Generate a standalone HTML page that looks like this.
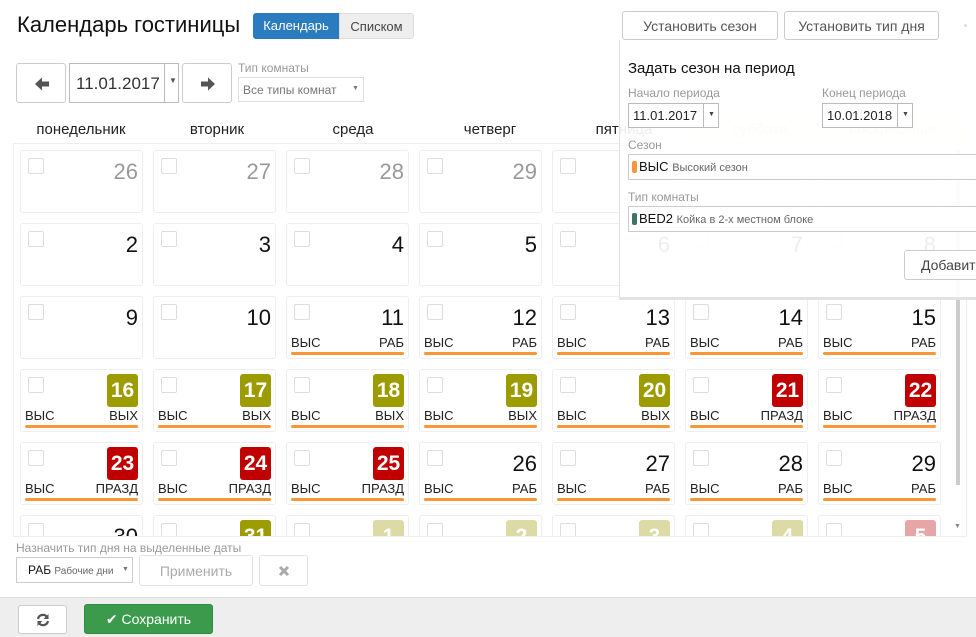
<!DOCTYPE html>
<html><head><meta charset="utf-8"><style>
*{box-sizing:border-box;margin:0;padding:0}
body{width:976px;height:637px;overflow:hidden;background:#fff;font-family:"Liberation Sans","DejaVu Sans",sans-serif;color:#222;position:relative}
.a{position:absolute}
.btn{position:absolute;border:1px solid #ccc;border-radius:3px;background:#fff;color:#555;text-align:center}
.wd{position:absolute;top:121px;font-size:15px;color:#222;text-align:center;width:134px}
.clip{position:absolute;left:13px;top:143px;width:943px;height:394px;overflow:hidden;border-left:1px solid #eee;border-top:1px solid #eee}
.c{position:absolute;width:123px;height:63px;border:1px solid #eee;border-radius:3px;background:#fff}
.cb{position:absolute;left:7px;top:7px;width:16px;height:16px;border:1px solid #ddd;border-radius:2px}
.n{position:absolute;right:4px;top:6px;font-size:22px;line-height:30px;color:#111}
.g .n{color:#999}
.f{opacity:.35}
.b{position:absolute;right:4px;top:4px;width:31px;height:33px;border-radius:3px;color:#fff;font-size:21px;font-weight:bold;line-height:33px;text-align:center}
.ol{background:#9c9b00}.rd{background:#c00000}
.l{position:absolute;left:4px;top:38px;font-size:13px;color:#222}
.r{position:absolute;right:4px;top:38px;font-size:13px;color:#222}
.ln{position:absolute;left:4px;right:4px;top:55px;height:3px;background:#f7973a;border-radius:2px}
.lab{position:absolute;font-size:12px;color:#999}
.inp{position:absolute;border:1px solid #ccc;background:#fff}
</style></head><body>
<div class="a" style="left:17px;top:12px;font-size:22px;color:#111">Календарь гостиницы</div>
<div class="a" style="left:253px;top:13px;width:86px;height:26px;background:#2b7bbf;color:#fff;font-size:13px;line-height:26px;text-align:center;border-radius:3px 0 0 3px">Календарь</div>
<div class="a" style="left:339px;top:13px;width:75px;height:26px;background:#eee;color:#444;font-size:13px;line-height:26px;text-align:center;border:1px solid #ddd;border-radius:0 3px 3px 0">Списком</div>

<div class="btn" style="left:16px;top:63px;width:50px;height:40px"><svg class="a" style="left:17px;top:12px" width="16" height="16" viewBox="0 0 16 16"><path d="M1 8 L8 1.5 L8 5.5 L15 5.5 L15 10.5 L8 10.5 L8 14.5 Z" fill="#555"/></svg></div>
<div class="inp" style="left:69px;top:63px;width:110px;height:40px;border-color:#bbb"><span class="a" style="left:6px;top:10px;font-size:17px;color:#333">11.01.2017</span><span class="a" style="left:94px;top:0;width:1px;height:38px;background:#bbb"></span><span class="a" style="left:99px;top:12px;font-size:8px;color:#555">▼</span></div>
<div class="btn" style="left:182px;top:63px;width:50px;height:40px"><svg class="a" style="left:17px;top:12px" width="16" height="16" viewBox="0 0 16 16"><path d="M15 8 L8 1.5 L8 5.5 L1 5.5 L1 10.5 L8 10.5 L8 14.5 Z" fill="#555"/></svg></div>
<div class="lab" style="left:238px;top:61px">Тип комнаты</div>
<div class="inp" style="left:238px;top:77px;width:126px;height:25px;border-color:#ddd"><span class="a" style="left:4px;top:5px;font-size:12px;color:#777">Все типы комнат</span><span class="a" style="left:113px;top:7px;font-size:7px;color:#777">▼</span></div>

<div class="btn" style="left:622px;top:11px;width:156px;height:29px;line-height:28px;font-size:14px">Установить сезон</div>
<div class="btn" style="left:784px;top:11px;width:155px;height:29px;line-height:28px;font-size:14px">Установить тип дня</div>
<div class="a" style="left:964px;top:24px;width:3px;height:3px;border-radius:2px;background:#ddd"></div>

<div class="a" style="left:693px;top:120px;width:272px;height:23px;background:#fdf3ea"></div>
<div class="wd" style="left:14px">понедельник</div>
<div class="wd" style="left:150px">вторник</div>
<div class="wd" style="left:286px">среда</div>
<div class="wd" style="left:423px">четверг</div>
<div class="wd" style="left:557px">пятница</div>
<div class="wd" style="left:693px;color:#f0c9a5">суббота</div>
<div class="wd" style="left:826px;color:#f0c9a5">воскресенье</div>

<div class="clip">
<div class="c g" style="left:6px;top:6px"><div class="cb"></div><div class="n">26</div></div>
<div class="c g" style="left:139px;top:6px"><div class="cb"></div><div class="n">27</div></div>
<div class="c g" style="left:272px;top:6px"><div class="cb"></div><div class="n">28</div></div>
<div class="c g" style="left:405px;top:6px"><div class="cb"></div><div class="n">29</div></div>
<div class="c g" style="left:538px;top:6px"><div class="cb"></div><div class="n">30</div></div>
<div class="c g" style="left:671px;top:6px"><div class="cb"></div><div class="n">31</div></div>
<div class="c g" style="left:804px;top:6px"><div class="cb"></div><div class="n">1</div></div>
<div class="c" style="left:6px;top:79px"><div class="cb"></div><div class="n">2</div></div>
<div class="c" style="left:139px;top:79px"><div class="cb"></div><div class="n">3</div></div>
<div class="c" style="left:272px;top:79px"><div class="cb"></div><div class="n">4</div></div>
<div class="c" style="left:405px;top:79px"><div class="cb"></div><div class="n">5</div></div>
<div class="c" style="left:538px;top:79px"><div class="cb"></div><div class="n">6</div></div>
<div class="c" style="left:671px;top:79px"><div class="cb"></div><div class="n">7</div></div>
<div class="c" style="left:804px;top:79px"><div class="cb"></div><div class="n">8</div></div>
<div class="c" style="left:6px;top:152px"><div class="cb"></div><div class="n">9</div></div>
<div class="c" style="left:139px;top:152px"><div class="cb"></div><div class="n">10</div></div>
<div class="c" style="left:272px;top:152px"><div class="cb"></div><div class="n">11</div><div class="l">ВЫС</div><div class="r">РАБ</div><div class="ln"></div></div>
<div class="c" style="left:405px;top:152px"><div class="cb"></div><div class="n">12</div><div class="l">ВЫС</div><div class="r">РАБ</div><div class="ln"></div></div>
<div class="c" style="left:538px;top:152px"><div class="cb"></div><div class="n">13</div><div class="l">ВЫС</div><div class="r">РАБ</div><div class="ln"></div></div>
<div class="c" style="left:671px;top:152px"><div class="cb"></div><div class="n">14</div><div class="l">ВЫС</div><div class="r">РАБ</div><div class="ln"></div></div>
<div class="c" style="left:804px;top:152px"><div class="cb"></div><div class="n">15</div><div class="l">ВЫС</div><div class="r">РАБ</div><div class="ln"></div></div>
<div class="c" style="left:6px;top:225px"><div class="cb"></div><div class="b ol">16</div><div class="l">ВЫС</div><div class="r">ВЫХ</div><div class="ln"></div></div>
<div class="c" style="left:139px;top:225px"><div class="cb"></div><div class="b ol">17</div><div class="l">ВЫС</div><div class="r">ВЫХ</div><div class="ln"></div></div>
<div class="c" style="left:272px;top:225px"><div class="cb"></div><div class="b ol">18</div><div class="l">ВЫС</div><div class="r">ВЫХ</div><div class="ln"></div></div>
<div class="c" style="left:405px;top:225px"><div class="cb"></div><div class="b ol">19</div><div class="l">ВЫС</div><div class="r">ВЫХ</div><div class="ln"></div></div>
<div class="c" style="left:538px;top:225px"><div class="cb"></div><div class="b ol">20</div><div class="l">ВЫС</div><div class="r">ВЫХ</div><div class="ln"></div></div>
<div class="c" style="left:671px;top:225px"><div class="cb"></div><div class="b rd">21</div><div class="l">ВЫС</div><div class="r">ПРАЗД</div><div class="ln"></div></div>
<div class="c" style="left:804px;top:225px"><div class="cb"></div><div class="b rd">22</div><div class="l">ВЫС</div><div class="r">ПРАЗД</div><div class="ln"></div></div>
<div class="c" style="left:6px;top:298px"><div class="cb"></div><div class="b rd">23</div><div class="l">ВЫС</div><div class="r">ПРАЗД</div><div class="ln"></div></div>
<div class="c" style="left:139px;top:298px"><div class="cb"></div><div class="b rd">24</div><div class="l">ВЫС</div><div class="r">ПРАЗД</div><div class="ln"></div></div>
<div class="c" style="left:272px;top:298px"><div class="cb"></div><div class="b rd">25</div><div class="l">ВЫС</div><div class="r">ПРАЗД</div><div class="ln"></div></div>
<div class="c" style="left:405px;top:298px"><div class="cb"></div><div class="n">26</div><div class="l">ВЫС</div><div class="r">РАБ</div><div class="ln"></div></div>
<div class="c" style="left:538px;top:298px"><div class="cb"></div><div class="n">27</div><div class="l">ВЫС</div><div class="r">РАБ</div><div class="ln"></div></div>
<div class="c" style="left:671px;top:298px"><div class="cb"></div><div class="n">28</div><div class="l">ВЫС</div><div class="r">РАБ</div><div class="ln"></div></div>
<div class="c" style="left:804px;top:298px"><div class="cb"></div><div class="n">29</div><div class="l">ВЫС</div><div class="r">РАБ</div><div class="ln"></div></div>
<div class="c" style="left:6px;top:371px"><div class="cb"></div><div class="n">30</div></div>
<div class="c" style="left:139px;top:371px"><div class="cb"></div><div class="b ol">31</div></div>
<div class="c" style="left:272px;top:371px"><div class="cb"></div><div class="b ol f">1</div></div>
<div class="c" style="left:405px;top:371px"><div class="cb"></div><div class="b ol f">2</div></div>
<div class="c" style="left:538px;top:371px"><div class="cb"></div><div class="b ol f">3</div></div>
<div class="c" style="left:671px;top:371px"><div class="cb"></div><div class="b ol f">4</div></div>
<div class="c" style="left:804px;top:371px"><div class="cb"></div><div class="b rd f">5</div></div>
</div>
<div class="a" style="left:956px;top:150px;width:4px;height:335px;background:#ccc"></div>
<div class="a" style="left:954px;top:523px;font-size:7px;color:#888">▼</div>
<div class="a" style="left:966px;top:143px;width:1px;height:394px;background:#eee"></div>
<div class="a" style="left:13px;top:536px;width:954px;height:1px;background:#eee"></div>

<div class="a" style="left:619px;top:40px;width:357px;height:260px;background:rgba(255,255,255,.93);border-left:1px solid #e3e3e3;border-bottom:3px solid #e3e3e3">
<div class="a" style="left:8px;top:20px;font-size:15px;color:#111">Задать сезон на период</div>
<div class="lab" style="left:8px;top:46px">Начало периода</div>
<div class="inp" style="left:8px;top:63px;width:91px;height:25px;border-color:#bbb"><span class="a" style="left:4px;top:4px;font-size:13px;color:#222">11.01.2017</span><span class="a" style="left:74px;top:0;width:1px;height:23px;background:#bbb"></span><span class="a" style="left:79px;top:7px;font-size:7px;color:#444">▼</span></div>
<div class="lab" style="left:202px;top:46px">Конец периода</div>
<div class="inp" style="left:202px;top:63px;width:91px;height:25px;border-color:#bbb"><span class="a" style="left:4px;top:4px;font-size:13px;color:#222">10.01.2018</span><span class="a" style="left:74px;top:0;width:1px;height:23px;background:#bbb"></span><span class="a" style="left:79px;top:7px;font-size:7px;color:#444">▼</span></div>
<div class="lab" style="left:8px;top:98px">Сезон</div>
<div class="inp" style="left:8px;top:114px;width:360px;height:26px"><span class="a" style="left:3px;top:6px;width:5px;height:12px;border-radius:2px;background:#f7973a"></span><span class="a" style="left:10px;top:4px;font-size:13px;color:#111">ВЫС <span style="font-size:11px;color:#666">Высокий сезон</span></span></div>
<div class="lab" style="left:8px;top:150px">Тип комнаты</div>
<div class="inp" style="left:8px;top:166px;width:360px;height:26px"><span class="a" style="left:3px;top:6px;width:5px;height:12px;border-radius:2px;background:#3f7366"></span><span class="a" style="left:10px;top:4px;font-size:13px;color:#111">BED2 <span style="font-size:11px;color:#666">Койка в 2-х местном блоке</span></span></div>
<div class="btn" style="left:284px;top:210px;width:90px;height:30px;line-height:28px;font-size:14px;text-align:left;padding-left:16px;color:#444">Добавить</div>
</div>

<div class="lab" style="left:16px;top:541px">Назначить тип дня на выделенные даты</div>
<div class="inp" style="left:16px;top:557px;width:117px;height:26px"><span class="a" style="left:11px;top:5px;font-size:12px;color:#111">РАБ <span style="font-size:10px;color:#666">Рабочие дни</span></span><span class="a" style="left:105px;top:8px;font-size:7px;color:#777">▼</span></div>
<div class="btn" style="left:139px;top:555px;width:114px;height:31px;line-height:30px;font-size:14px;color:#aaa;border-color:#e3e3e3">Применить</div>
<div class="btn" style="left:259px;top:555px;width:49px;height:31px;border-color:#e3e3e3"><svg class="a" style="left:18px;top:9px" width="12" height="12" viewBox="0 0 12 12"><path d="M2 2 L10 10 M10 2 L2 10" stroke="#aaa" stroke-width="3"/></svg></div>

<div class="a" style="left:0;top:597px;width:976px;height:40px;background:#eee;border-top:1px solid #ddd"></div>
<div class="btn" style="left:18px;top:605px;width:49px;height:29px"><svg class="a" style="left:17px;top:7px" width="14" height="14" viewBox="0 0 14 14"><path d="M2 6 A5 5 0 0 1 11 4" stroke="#555" stroke-width="2.2" fill="none"/><path d="M12.5 1 L12.5 6 L7.5 6 Z" fill="#555"/><path d="M12 8 A5 5 0 0 1 3 10" stroke="#555" stroke-width="2.2" fill="none"/><path d="M1.5 13 L1.5 8 L6.5 8 Z" fill="#555"/></svg></div>
<div class="a" style="left:84px;top:604px;width:129px;height:30px;background:#3c9a4c;border:1px solid #2f8a3e;border-radius:3px;color:#fff;font-size:14px;line-height:28px;text-align:center">✔ Сохранить</div>
</body></html>
